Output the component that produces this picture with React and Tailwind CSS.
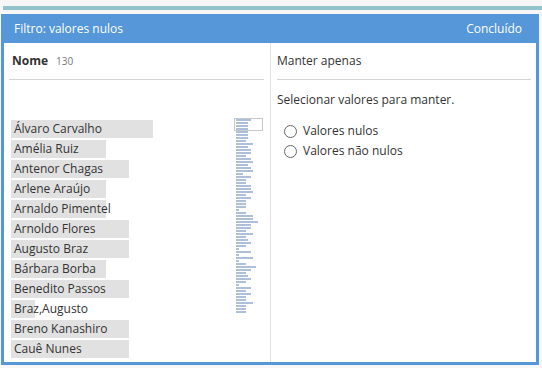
import React from 'react';

const names = [
  ['Álvaro Carvalho', 142],
  ['Amélia Ruiz', 95],
  ['Antenor Chagas', 118],
  ['Arlene Araújo', 95],
  ['Arnaldo Pimentel', 95],
  ['Arnoldo Flores', 118],
  ['Augusto Braz', 118],
  ['Bárbara Borba', 95],
  ['Benedito Passos', 118],
  ['Braz,Augusto', 24],
  ['Breno Kanashiro', 118],
  ['Cauê Nunes', 118],
];

const spark = [
  15, 12, 12, 12, 12, 12, 12, 10, 17, 12, 15, 15, 10, 15, 17, 12, 15, 17, 7, 15, 10, 10,
  15, 15, 17, 10, 15, 10, 10, 10, 3, 10, 17, 17, 22, 15, 15, 10, 17, 10, 12, 15, 10, 3,
  15, 3, 17, 3, 10, 20, 15, 10, 12, 15, 10, 3, 15, 10, 15, 10, 10, 17, 10, 10, 10,
];

const font = { fontFamily: '"Open Sans", "Noto Sans", sans-serif' };

const Radio = ({ label }) => (
  <div className="flex items-center h-[20px]">
    <span className="w-[13px] h-[13px] rounded-full border border-[#666] bg-white" />
    <span className="ml-[6px]">{label}</span>
  </div>
);

export default function App() {
  return (
    <div className="w-[542px] h-[368px] bg-[#f6f6f6] pt-[6px] text-[#333]" style={font}>
      {/* top strip */}
      <div className="ml-[3px] h-[4px] bg-[#93c3ca]" />

      <div className="mt-[4px] ml-[1px] w-[538px] h-[351px] flex flex-col">
        {/* Header */}
        <div className="h-[29px] bg-[#5597d8] flex items-center justify-between pl-[13px] pr-[17px] text-white text-[12px]">
          <span>Filtro: valores nulos</span>
          <span>Concluído</span>
        </div>

        {/* Body */}
        <div className="flex-1 flex bg-white border-x-[3px] border-b-[3px] border-[#5597d8]">
          {/* Left column */}
          <div className="w-[267px] border-r border-[#e2e2e2] pl-[5px] pr-[6px]">
            <div className="h-[37px] flex items-center pl-[3px] border-b border-[#d4d4d4]">
              <span className="font-bold text-[12px]">Nome</span>
              <span className="ml-[8px] text-[10px] text-[#777]">130</span>
            </div>

            <div className="flex pl-[2px] pt-[40px]">
              <div className="w-[223px] text-[12px]">
                {names.map(([n, w]) => (
                  <div
                    key={n}
                    className="h-[18px] mb-[2px] bg-[#e1e1e1] pl-[3px] leading-[18px] whitespace-nowrap"
                    style={{ width: w }}
                  >
                    {n}
                  </div>
                ))}
              </div>

              <div className="relative w-[29px] -mt-[2px] pl-[2px] pt-[1px]">
                {spark.map((w, i) => (
                  <div key={i} className="h-[2px] mb-[1px] bg-[#adbfd9]" style={{ width: w }} />
                ))}
                <div className="absolute left-0 top-0 w-[29px] h-[13px] border border-[#c8c8c8]" />
              </div>
            </div>
          </div>

          {/* Right column */}
          <div className="flex-1 pl-[6px] pr-[5px] text-[12px]">
            <div className="h-[37px] flex items-center border-b border-[#d4d4d4]">
              Manter apenas
            </div>
            <div className="mt-[11px] h-[18px] flex items-center">Selecionar valores para manter.</div>
            <div className="mt-[12px] pl-[7px]">
              <Radio label="Valores nulos" />
              <Radio label="Valores não nulos" />
            </div>
          </div>
        </div>
      </div>
    </div>
  );
}
